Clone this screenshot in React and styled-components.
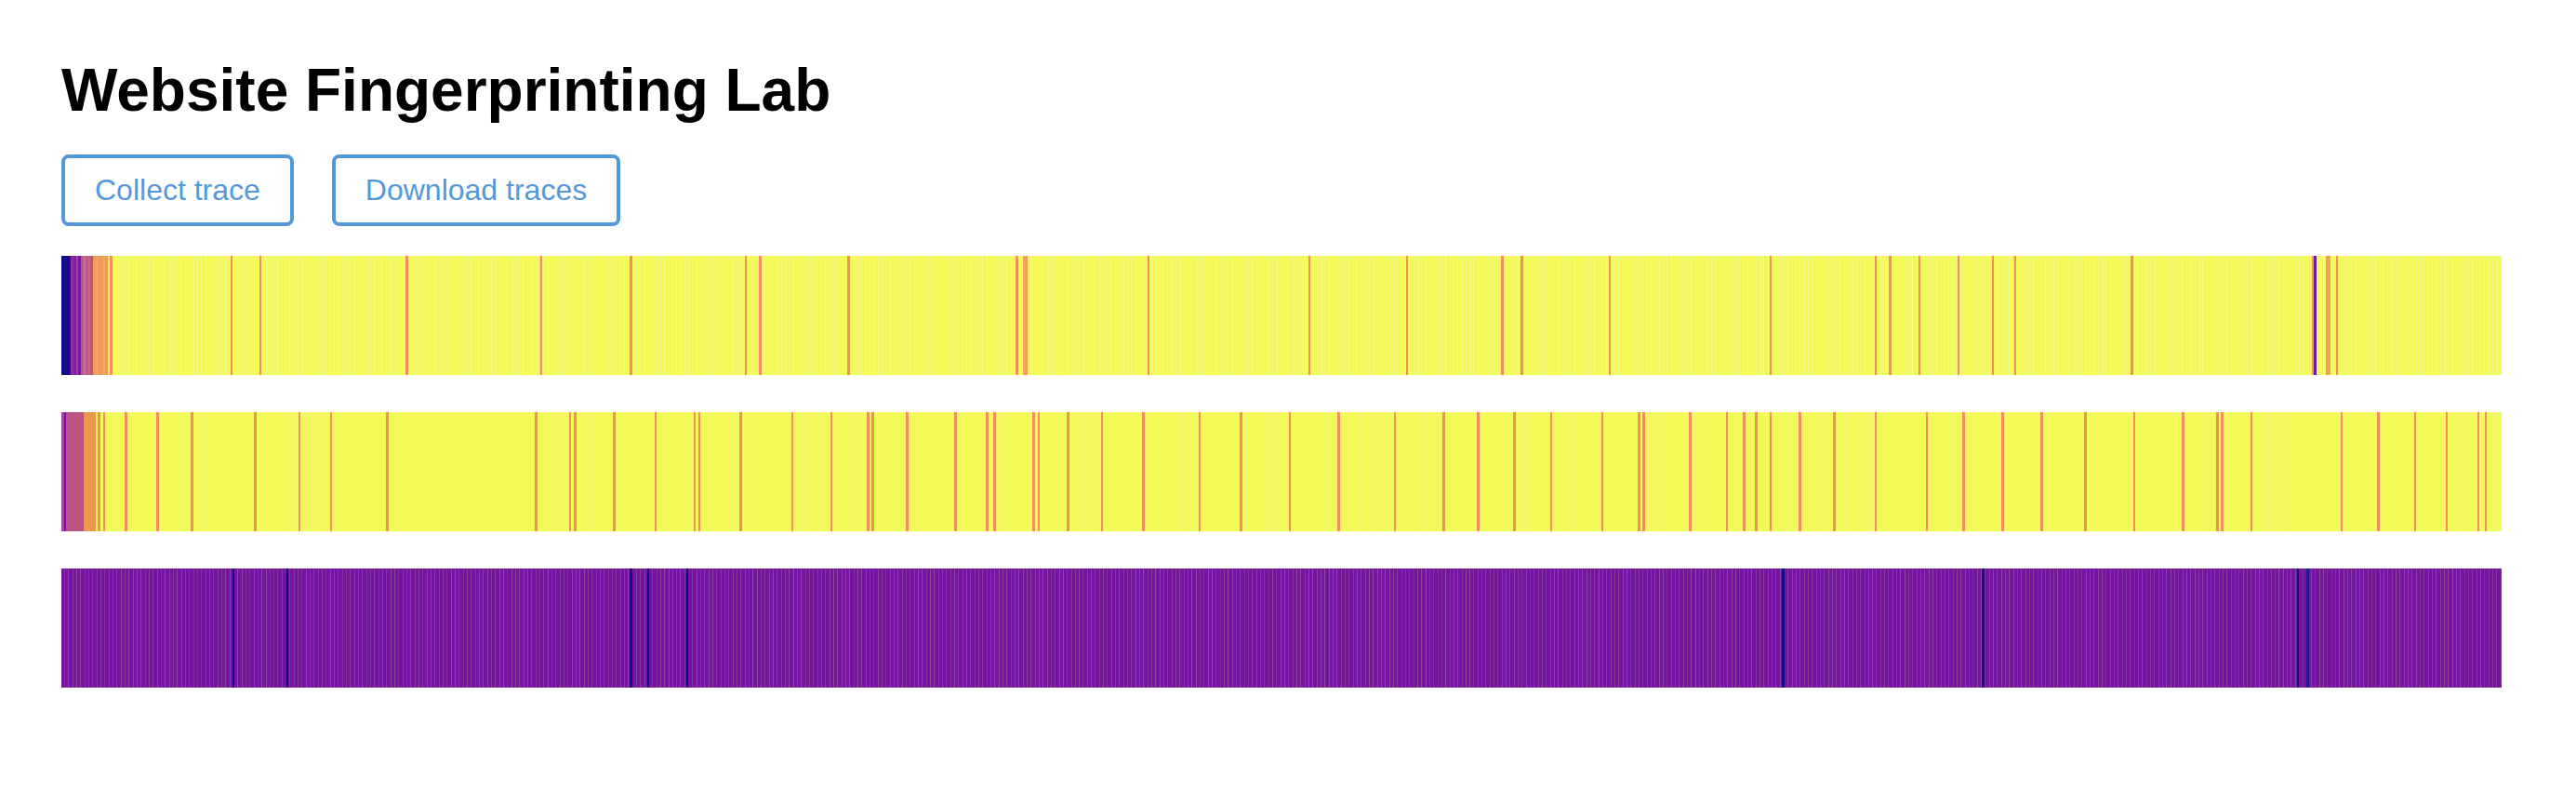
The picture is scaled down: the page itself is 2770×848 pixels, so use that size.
import React from "react";
import styled, { createGlobalStyle } from "styled-components";

const GlobalStyle = createGlobalStyle`
  body {
    margin: 0;
    background: #fff;
    font-family: "Liberation Sans", Arial, sans-serif;
  }
`;

const Page = styled.main`
  padding: 60px 80px 107px 66px;
`;

const Title = styled.h1`
  margin: 0 0 32px;
  font-size: 64px;
  line-height: 74px;
  font-weight: 700;
  color: #000;
`;

const Toolbar = styled.div`
  display: flex;
  gap: 41px;
  margin-bottom: 32px;
`;

const Button = styled.button`
  padding: 16px 32px;
  border: 4px solid #5498db;
  border-radius: 8px;
  background: #fff;
  color: #5498db;
  font-family: inherit;
  font-size: 32px;
  line-height: 37px;
  cursor: pointer;
`;

const Traces = styled.div`
  display: flex;
  flex-direction: column;
  gap: 40px;
`;

const Strip = styled.svg`
  display: block;
  width: 100%;
  height: 128px;
`;

const CELLS = 1000;
const CELL_W = 2.624;
const STRIP_W = 2624;
const cellAt = (x) => Math.floor((x - 66) / CELL_W);

const YELLOW = "#f3f958";
const ORANGE = "#f0905e";
const PURPLE = "#7514a0";
const BLUE = "#0f0a87";

function random(seed) {
  let s = seed;
  return () => {
    s = (s * 1664525 + 1013904223) % 4294967296;
    return ((s >>> 8) % 65536) / 65536;
  };
}

function buildRow({ seed, base, faint, density, thin, head, lines, overrides = {} }) {
  const rnd = random(seed);
  const cells = [];
  for (let i = 0; i < CELLS; i++) {
    cells.push(rnd() < density ? faint : base);
  }
  head.forEach((c, i) => (cells[i] = c));
  lines.forEach((x) => (cells[cellAt(x)] = ORANGE));
  Object.entries(overrides).forEach(([x, c]) => (cells[cellAt(Number(x))] = c));

  // thin 1px streaks, roughly every 4.3px, only over plain cells
  const streaks = [];
  if (thin) {
    for (let x = 3; x < STRIP_W; x += 4.33) {
      const px = Math.round(x);
      const cell = cells[Math.floor(px / CELL_W)];
      if (cell === base || cell === faint) {
        streaks.push({ x: px, opacity: 0.45 + rnd() * 0.55 });
      }
    }
  }
  return { cells, streaks, thin };
}

const rows = [
  buildRow({
    seed: 11,
    base: YELLOW,
    faint: YELLOW,
    density: 0,
    thin: "#f6fa86",
    head: [
      BLUE, "#1a0c8c", BLUE, "#2a0a90",
      "#8d2c9c", "#7f1fa2", "#a63e96", "#6f17a6",
      "#bf5a85", "#c9708f", "#bf5a85", "#c4668a", "#bc5284",
      "#ee9b55", "#f0a460", "#ee9b55", "#ee9b55", "#f2a866", "#ee9b55",
      "#f6ea6c", ORANGE,
    ],
    lines: [
      248, 279, 437, 581, 678, 802, 818, 912, 1093, 1234, 1408, 1512, 1615,
      1636, 1730, 1903, 2017, 2032, 2064, 2106, 2143, 2166, 2292, 2513,
    ],
    overrides: {
      1100: "#f2a05e",
      1103: "#f2a05e",
      2486: "#ee9a60",
      2489: "#6f17a6",
      2502: "#f2a05e",
      2505: "#f2a05e",
    },
  }),
  buildRow({
    seed: 29,
    base: YELLOW,
    faint: "#f4f76a",
    density: 0.06,
    head: [
      "#a8459b", "#7014a3", "#bb5184", "#bb5184", "#bd5486", "#bb5184",
      "#bb5184", "#bd5486", "#bb5184",
      "#e9964e", "#ea9850", "#e9964e", "#e9964e", "#e9964e",
      YELLOW, ORANGE, YELLOW, ORANGE,
    ],
    lines: [
      136, 170, 207, 275, 322, 355, 416, 576, 613, 618, 660, 704, 746, 752,
      797, 851, 893, 933, 938, 975, 1027, 1061, 1070, 1112, 1117, 1148, 1185,
      1229, 1290, 1336, 1386, 1440, 1499, 1552, 1589, 1628, 1667, 1723, 1762,
      1767, 1817, 1857, 1875, 1888, 1904, 1935, 1972, 2016, 2072, 2111, 2153,
      2195, 2242, 2295, 2347, 2384, 2389, 2420, 2518, 2557, 2596, 2630, 2665,
      2673,
    ],
  }),
  buildRow({
    seed: 53,
    base: PURPLE,
    faint: PURPLE,
    density: 0,
    thin: "#8f4a9c",
    head: [],
    lines: [],
    overrides: {
      251: BLUE,
      309: BLUE,
      679: BLUE,
      696: BLUE,
      739: BLUE,
      1917: BLUE,
      2132: BLUE,
      2471: BLUE,
      2481: "#1f1a8a",
    },
  }),
];

function Trace({ row }) {
  return (
    <Strip viewBox={`0 0 ${STRIP_W} 128`} preserveAspectRatio="none" shapeRendering="crispEdges">
      {row.cells.map((c, i) => (
        <rect key={i} x={i * CELL_W} y={0} width={CELL_W} height={128} fill={c} />
      ))}
      {row.streaks.map((s) => (
        <rect key={s.x} x={s.x} y={0} width={1} height={128} fill={row.thin} fillOpacity={s.opacity} />
      ))}
    </Strip>
  );
}

export default function App() {
  return (
    <>
      <GlobalStyle />
      <Page>
        <Title>Website Fingerprinting Lab</Title>
        <Toolbar>
          <Button>Collect trace</Button>
          <Button>Download traces</Button>
        </Toolbar>
        <Traces>
          {rows.map((row, i) => (
            <Trace key={i} row={row} />
          ))}
        </Traces>
      </Page>
    </>
  );
}
